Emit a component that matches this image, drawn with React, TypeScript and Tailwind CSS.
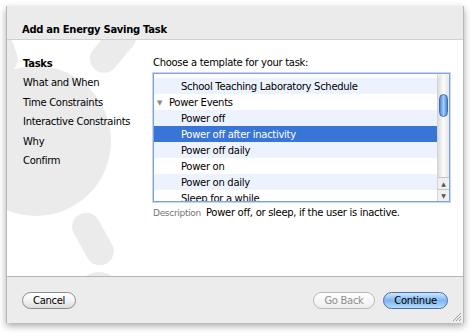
import React from "react";

const rows: { label: string; kind: "child" | "group" | "partial"; shade: boolean; selected?: boolean }[] = [
  { label: "School Office Hours Schedule", kind: "partial", shade: false },
  { label: "School Teaching Laboratory Schedule", kind: "child", shade: true },
  { label: "Power Events", kind: "group", shade: false },
  { label: "Power off", kind: "child", shade: true },
  { label: "Power off after inactivity", kind: "child", shade: false, selected: true },
  { label: "Power off daily", kind: "child", shade: true },
  { label: "Power on", kind: "child", shade: false },
  { label: "Power on daily", kind: "child", shade: true },
  { label: "Sleep for a while", kind: "child", shade: false },
];

const steps = ["What and When", "Time Constraints", "Interactive Constraints", "Why", "Confirm"];

function Watermark() {
  return (
    <svg className="absolute left-0 top-0" width="160" height="236" viewBox="0 0 160 236">
      <g fill="#ebebeb">
        <circle cx="29" cy="101" r="75" />
        <rect x="-14" y="-28" width="28" height="56" rx="14" transform="translate(106 8) rotate(40)" />
        <rect x="-14" y="-28" width="28" height="56" rx="14" transform="translate(86 199) rotate(-29)" />
        <rect x="-14" y="-28" width="28" height="56" rx="14" transform="translate(-8 6) rotate(-20)" />
        <circle cx="92" cy="254" r="22" />
      </g>
    </svg>
  );
}

function Scroller() {
  return (
    <div className="w-[12px] flex flex-col bg-[#f4f4f4] border-l border-[#d4d4d4]">
      <div className="flex-1 relative rounded-t-[6px] bg-gradient-to-r from-[#dcdcdc] via-[#fbfbfb] to-[#e4e4e4]">
        <div className="absolute left-[1px] right-[1px] top-[20px] h-[23px] rounded-full border border-[#3f6fb5] bg-gradient-to-r from-[#4b86d8] via-[#a9d0f7] to-[#4a84d6]" />
      </div>
      <div className="h-[12px] flex items-center justify-center border-t border-[#c4c4c4] bg-[#f0f0f0] text-[6px] leading-none text-[#555]">
        ▲
      </div>
      <div className="h-[12px] flex items-center justify-center border-t border-[#c4c4c4] bg-[#f0f0f0] text-[6px] leading-none text-[#555]">
        ▼
      </div>
    </div>
  );
}

function Pill({ children, variant }: { children: React.ReactNode; variant: "plain" | "disabled" | "blue" }) {
  const look =
    variant === "blue"
      ? "border-[#4a6fae] bg-gradient-to-b from-[#cfe6fd] via-[#7fb5ef] to-[#b6dcfb] text-black"
      : variant === "disabled"
      ? "border-[#b9b9b9] bg-gradient-to-b from-white to-[#ededed] text-[#8e8e8e]"
      : "border-[#8a8a8a] bg-gradient-to-b from-white via-[#f3f3f3] to-[#dcdcdc] text-black";
  return (
    <div className={`h-[17px] pt-[1px] rounded-full border flex items-center justify-center text-[10px] leading-none ${look}`}>
      {children}
    </div>
  );
}

export default function App() {
  return (
    <div className="w-[470px] h-[336px] bg-white pt-[6px] pl-[6px] font-['DejaVu_Sans',sans-serif] tracking-[-0.3px] text-black">
      <div className="w-[458px] h-[317px] flex flex-col bg-[#ececec] border-x border-[#b8b8b8] shadow-[0_3px_7px_rgba(0,0,0,0.35)] relative">
        {/* title */}
        <div className="h-[34px] pt-[17px] pl-[15px] border-b border-[#d0d0d0] bg-[#ebebeb]">
          <div className="text-[10px] leading-[14px] font-bold">Add an Energy Saving Task</div>
        </div>

        {/* body */}
        <div className="h-[236px] bg-white relative overflow-hidden flex">
          <Watermark />
          <div className="relative w-[146px] pl-[16px] pt-[14px] text-[10px] leading-[19.4px]">
            <div className="font-bold">Tasks</div>
            {steps.map((s) => (
              <div key={s}>{s}</div>
            ))}
          </div>

          <div className="relative flex flex-col">
            <div className="mt-[16px] text-[10px] leading-[14px]">Choose a template for your task:</div>
            <div className="mt-[3px] w-[297px] h-[129px] border border-[#7fa4db] shadow-[0_0_0_1px_#c3d7f2] flex bg-white">
              <div className="flex-1 overflow-hidden">
                <div className="-mt-[12px]">
                  {rows.map((r) => (
                    <div
                      key={r.label}
                      className={`h-[16px] pt-[2px] flex items-center text-[10px] leading-none whitespace-nowrap ${
                        r.selected ? "bg-[#3875d7] text-white" : r.shade ? "bg-[#edf3fe]" : "bg-white"
                      } ${r.kind === "group" ? "pl-[3px]" : "pl-[27px]"}`}
                    >
                      {r.kind === "group" && <span className="w-[12px] text-[7px] text-[#8a8a8a]">▼</span>}
                      {r.label}
                    </div>
                  ))}
                </div>
              </div>
              <Scroller />
            </div>
            <div className="mt-[4px] flex items-center leading-[14px]">
              <span className="w-[53px] text-[9px] text-[#767676]">Description</span>
              <span className="text-[10px]">Power off, or sleep, if the user is inactive.</span>
            </div>
          </div>
        </div>

        {/* footer */}
        <div className="flex-1 border-t border-[#b4b4b4] pt-[15px] px-[15px] flex">
          <div className="w-[54px]">
            <Pill variant="plain">Cancel</Pill>
          </div>
          <div className="flex-1" />
          <div className="w-[62px] mr-[8px]">
            <Pill variant="disabled">Go Back</Pill>
          </div>
          <div className="w-[65px]">
            <Pill variant="blue">Continue</Pill>
          </div>
        </div>

        <svg className="absolute right-[2px] bottom-[2px]" width="9" height="9" viewBox="0 0 9 9">
          <g stroke="#9a9a9a" strokeWidth="1">
            <line x1="1" y1="9" x2="9" y2="1" />
            <line x1="4" y1="9" x2="9" y2="4" />
            <line x1="7" y1="9" x2="9" y2="7" />
          </g>
        </svg>
      </div>
    </div>
  );
}
